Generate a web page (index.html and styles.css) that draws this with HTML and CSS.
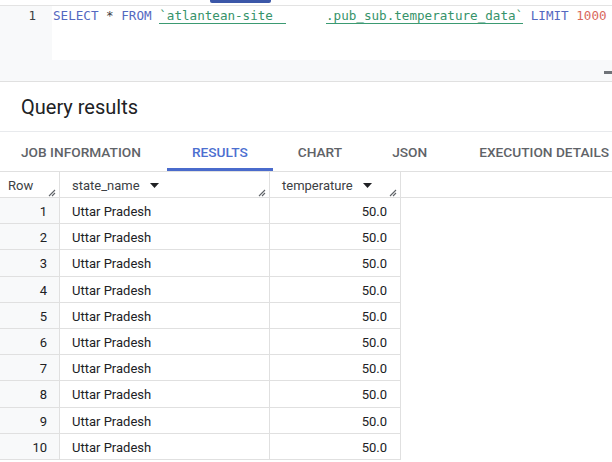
FILE: index.html
```html
<!DOCTYPE html>
<html>
<head>
<meta charset="utf-8">
<link rel="stylesheet" href="styles.css">
</head>
<body>
<div class="topstrip"><div class="topbtn"></div></div>
<div class="editor">
  <div class="gutter">1</div>
  <div class="code"><span class="kw">SELECT</span> <span class="op">*</span> <span class="kw">FROM</span> <span class="str str-a">`atlantean-site</span><span class="redact">       </span><span class="str str-b">.pub_sub.temperature_data`</span> <span class="kw">LIMIT</span> <span class="num">1000</span></div>
  <div class="editor-foot"><div class="thumb"></div></div>
</div>
<div class="title">Query results</div>
<div class="tabs">
  <div class="tab tab-first">JOB INFORMATION</div>
  <div class="tab active">RESULTS</div>
  <div class="tab">CHART</div>
  <div class="tab tab-json">JSON</div>
  <div class="tab">EXECUTION DETAILS</div>
</div>
<div class="thead">
  <div class="th">Row<svg class="grip" width="8" height="8" viewBox="0 0 8 8"><path d="M1 7L7 1M4 7L7 4" stroke="#5f6368" stroke-width="1.1"/></svg></div>
  <div class="th">state_name<svg class="caret" width="9" height="5" viewBox="0 0 9 5"><path d="M0 0H9L4.5 5Z" fill="#202124"/></svg><svg class="grip" width="8" height="8" viewBox="0 0 8 8"><path d="M1 7L7 1M4 7L7 4" stroke="#5f6368" stroke-width="1.1"/></svg></div>
  <div class="th">temperature<svg class="caret" width="9" height="5" viewBox="0 0 9 5"><path d="M0 0H9L4.5 5Z" fill="#202124"/></svg><svg class="grip" width="8" height="8" viewBox="0 0 8 8"><path d="M1 7L7 1M4 7L7 4" stroke="#5f6368" stroke-width="1.1"/></svg></div>
  <div class="th th-fill"></div>
</div>
<div class="tbody">
  <div class="tr"><div class="td num-col">1</div><div class="td">Uttar Pradesh</div><div class="td right">50.0</div></div>
  <div class="tr"><div class="td num-col">2</div><div class="td">Uttar Pradesh</div><div class="td right">50.0</div></div>
  <div class="tr"><div class="td num-col">3</div><div class="td">Uttar Pradesh</div><div class="td right">50.0</div></div>
  <div class="tr"><div class="td num-col">4</div><div class="td">Uttar Pradesh</div><div class="td right">50.0</div></div>
  <div class="tr"><div class="td num-col">5</div><div class="td">Uttar Pradesh</div><div class="td right">50.0</div></div>
  <div class="tr"><div class="td num-col">6</div><div class="td">Uttar Pradesh</div><div class="td right">50.0</div></div>
  <div class="tr"><div class="td num-col">7</div><div class="td">Uttar Pradesh</div><div class="td right">50.0</div></div>
  <div class="tr"><div class="td num-col">8</div><div class="td">Uttar Pradesh</div><div class="td right">50.0</div></div>
  <div class="tr"><div class="td num-col">9</div><div class="td">Uttar Pradesh</div><div class="td right">50.0</div></div>
  <div class="tr"><div class="td num-col">10</div><div class="td">Uttar Pradesh</div><div class="td right">50.0</div></div>
</div>
</body>
</html>
```
FILE: styles.css
```css
html, body {
  margin: 0;
  padding: 0;
  background: #ffffff;
}
body {
  width: 612px;
  height: 462px;
  overflow: hidden;
  font-family: Roboto, "Liberation Sans", sans-serif;
  color: #202124;
}
.topstrip {
  height: 5px;
  border-bottom: 1px solid #e3e3e3;
  display: flex;
}
.topbtn {
  margin-left: 210px;
  width: 61px;
  height: 3px;
  background: #3b57a8;
  border-radius: 0 0 2px 2px;
}
.editor {
  display: grid;
  grid-template-columns: 52px 1fr;
  grid-template-rows: 54px 21px;
  background: #f8f9fa;
  border-bottom: 1px solid #e0e0e0;
}
.gutter {
  font-family: "DejaVu Sans Mono", "Liberation Mono", monospace;
  font-size: 12.5px;
  line-height: 20px;
  color: #3c4043;
  text-align: right;
  padding-right: 16px;
}
.code {
  background: #ffffff;
  font-family: "DejaVu Sans Mono", "Liberation Mono", monospace;
  font-size: 12.6px;
  line-height: 20px;
  white-space: pre;
  color: #5f6368;
  padding-left: 1px;
}
.kw { color: #5468c0; }
.op { color: #3c4043; }
.str {
  color: #36936a;
  border-bottom: 1px solid #3b9a72;
}
.str-a { padding-right: 13px; }
.redact { color: transparent; margin-left: -13px; }
.num { color: #d9685c; }
.editor-foot {
  grid-column: 1 / 3;
  display: flex;
  justify-content: flex-end;
  align-items: flex-end;
  padding-bottom: 7px;
}
.thumb {
  width: 8px;
  height: 3px;
  background: #6f7378;
}
.title {
  height: 49px;
  padding-left: 21px;
  font-size: 20px;
  line-height: 50px;
  color: #202124;
  border-bottom: 1px solid #e8eaed;
}
.tabs {
  display: flex;
  height: 39px;
  border-bottom: 1px solid #e0e0e0;
}
.tab {
  padding: 0 25px;
  font-size: 13.7px;
  font-weight: 500;
  line-height: 41px;
  color: #5f6368;
  white-space: nowrap;
  box-sizing: border-box;
}
.tab-first { padding-left: 21px; padding-right: 26px; }
.tab-json { padding-right: 27px; }
.tab.active {
  color: #4c6fd0;
  border-bottom: 3px solid #4a6bcc;
  height: 39px;
}
.thead {
  display: grid;
  grid-template-columns: 60px 210px 131px 1fr;
  height: 25px;
  border-bottom: 1px solid #e0e0e0;
}
.th {
  position: relative;
  border-right: 1px solid #e0e0e0;
  font-size: 13px;
  line-height: 25px;
  color: #3c4043;
  padding-left: 12px;
  padding-top: 1px;
  box-sizing: border-box;
  display: flex;
  align-items: center;
}
.th:first-child { padding-left: 8px; }
.th-fill { border-right: none; }
.caret { margin-left: 10px; }
.grip {
  position: absolute;
  right: 3px;
  bottom: 1px;
}
.tbody {
  width: 401px;
}
.tr {
  display: grid;
  grid-template-columns: 60px 210px 131px;
  height: 26.2px;
  box-sizing: border-box;
}
.td {
  border-right: 1px solid #e0e0e0;
  border-bottom: 1px solid #e0e0e0;
  font-size: 13px;
  line-height: 27px;
  height: 26.2px;
  overflow: hidden;
  color: #202124;
  padding-left: 12px;
  box-sizing: border-box;
  white-space: nowrap;
}
.num-col {
  background: #f8f9fa;
  text-align: right;
  padding-left: 0;
  padding-right: 12px;
}
.right {
  text-align: right;
  padding-left: 0;
  padding-right: 13px;
}
```
